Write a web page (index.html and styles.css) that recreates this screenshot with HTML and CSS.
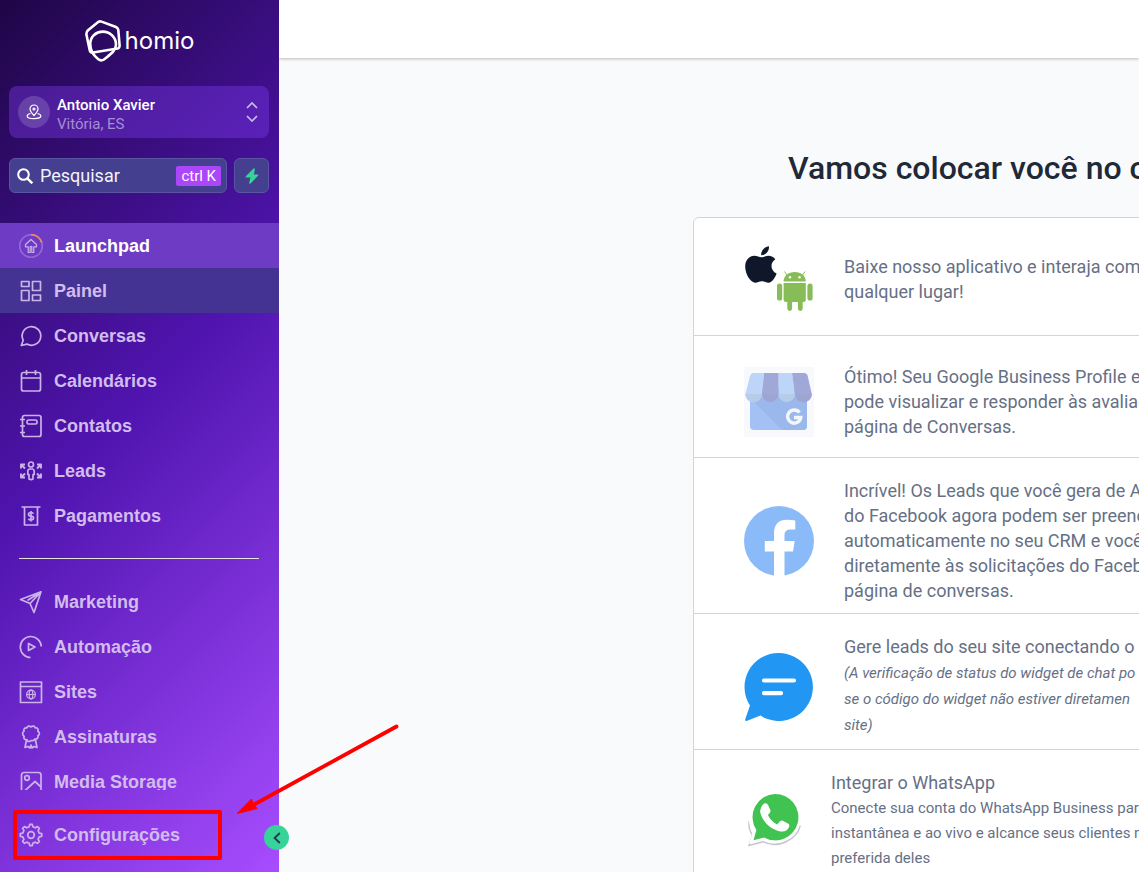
FILE: index.html
```
<!DOCTYPE html>
<html lang="pt-BR">
<head>
    <meta charset="UTF-8">
    <meta name="viewport" content="width=device-width, initial-scale=1.0">
    <title>Homio - Launchpad</title>
    <link rel="stylesheet" href="styles.css">
</head>
<body>
    <aside class="sidebar">
        <a class="logo" href="#">
            <svg width="36" height="42" viewBox="0 0 36 42" fill="none" stroke="#fff" stroke-width="2.6" stroke-linejoin="round">
                <path d="M13.500 1.700Q15 1 16.500 1.600L31 7Q33 8 33.300 10L34.600 25.500Q34.600 28 32.600 28.500L8 32.500Q5.500 32.700 4.800 30.500L1.400 14.500Q1.200 12 3 10.300Z"/>
                <path d="M5.200 23.500C5.500 16.500 11 11.600 17.800 11.600S31 17 31 24.500C31 31 25 34.500 19 39.500Q16 41.500 13 39C8 35 5.200 30 5.200 23.500Z"/>
            </svg>
            <span>homio</span>
        </a>
        <button class="account" type="button">
            <span class="avatar">
                <svg width="16" height="16" viewBox="0 0 16 16" fill="none" stroke="#fff" stroke-width="1.200" stroke-linejoin="round">
                    <path d="M8 11.500C5.500 8.900 4 7.200 4 5a4 4 0 0 1 8 0c0 2.200-1.500 3.900-4 6.500z"/>
                    <circle cx="8" cy="5" r="1"/>
                    <path d="M4.500 9.500C2.500 10 1.200 10.800 1.200 12c0 1.500 3 2.600 6.800 2.600s6.800-1.100 6.800-2.600c0-1.200-1.300-2-3.300-2.500"/>
                </svg>
            </span>
            <span class="account-text">
                <strong>Antonio Xavier</strong>
                <span>Vitória, ES</span>
            </span>
            <svg width="12" height="20" viewBox="0 0 12 20" fill="none" stroke="#cbbbe6" stroke-width="1.700">
                <path d="M1 6l5-5 5 5M1 14l5 5 5-5"/>
            </svg>
        </button>
        <div class="search-row">
            <div class="search">
                <svg width="16" height="16" viewBox="0 0 16 16" fill="none" stroke="#fff" stroke-width="2">
                    <circle cx="6.500" cy="6.500" r="5.300"/>
                    <path d="M10.300 10.300l5 5" stroke-width="2.400"/>
                </svg>
                <input type="text" placeholder="Pesquisar" aria-label="Pesquisar">
                <kbd>ctrl K</kbd>
            </div>
            <button class="bolt" type="button" aria-label="Ações rápidas">
                <svg width="14" height="16" viewBox="0 0 14 16" fill="#37d399">
                    <path d="M8.500.5L.8 8.300q-.5 1 .5 1.200H5.400L4 15.500h1.600L13.200 7.600q.5-1-.5-1.200H8.900L10 .5z"/>
                </svg>
            </button>
        </div>
        <nav class="menu">
            <a class="item active" href="#">
                <svg width="24" height="24" viewBox="0 0 24 24">
                    <circle cx="12" cy="12" r="11.300" stroke="#9566d6"/>
                    <path d="M12 .7a11.300 11.300 0 0 1 10.700 7.800" stroke="#f58a5b" stroke-width="1.800"/>
                    <path d="M12 5.500L6.500 10.500v2.300h2.700V18.500h2v-6h1.600v6h2v-5.700h2.700V10.500z" stroke-width="1.200"/>
                </svg>
                Launchpad
            </a>
            <a class="item hover" href="#">
                <svg width="24" height="24" viewBox="0 0 24 24">
                    <path d="M2.500 2.500h7.500v5h-7.500zM13.500 2.500h8v9h-8zM2.500 11.500h7.500v10h-7.500zM13.500 16h8v5.500h-8z"/>
                </svg>
                Painel
            </a>
            <a class="item" href="#">
                <svg width="24" height="24" viewBox="0 0 24 24">
                    <path d="M2.300 21.500l1.900-5.300A9.300 9.300 0 1 1 8 20.100z"/>
                </svg>
                Conversas
            </a>
            <a class="item" href="#">
                <svg width="24" height="24" viewBox="0 0 24 24">
                    <rect x="2.500" y="3.500" width="19" height="18.500" rx="2"/>
                    <path d="M7.500 1v5M16.500 1v5M2.500 9h19"/>
                </svg>
                Calendários
            </a>
            <a class="item" href="#">
                <svg width="24" height="24" viewBox="0 0 24 24">
                    <rect x="3.500" y="1.500" width="18.500" height="21" rx="2"/>
                    <rect x="8" y="6" width="10" height="4" rx="1.500"/>
                    <path d="M1 5.500h5M1 12h5M1 18.500h5"/>
                </svg>
                Contatos
            </a>
            <a class="item" href="#">
                <svg width="24" height="24" viewBox="0 0 24 24">
                    <circle cx="12" cy="5.500" r="2.500"/>
                    <path d="M10.500 10h3q1.700.3 1.700 2v3.500h-1.200v4.500q-2 1.200-4 0v-4.500H8.800V12q0-1.700 1.700-2z"/>
                    <path d="M6 9.500L2 5.500V9.500M1.500 5.500H6M18 9.500L22 5.500V9.500M22.500 5.500H18M6 14.500L2 18.500V14.500M1.500 18.500H6M18 14.500l4 4V14.500M22.500 18.500H18" stroke-width="1.900"/>
                </svg>
                Leads
            </a>
            <a class="item" href="#">
                <svg width="24" height="24" viewBox="0 0 24 24">
                    <path d="M2.500 3h19M5.500 3v18h13V3"/>
                    <path d="M14.500 9.800q-.5-1.300-2.500-1.300-2.500 0-2.500 1.800T12 12.200t2.500 1.900T12 16q-2 0-2.500-1.400M12 7v10.500"/>
                </svg>
                Pagamentos
            </a>
            <hr class="divider">
            <a class="item" href="#">
                <svg width="24" height="24" viewBox="0 0 24 24">
                    <path d="M22 1.800L1.500 9.500l9.500 4 4 9zM22 1.800L11 13.500M22 1.800L8.500 10.500"/>
                </svg>
                Marketing
            </a>
            <a class="item" href="#">
                <svg width="24" height="24" viewBox="0 0 24 24">
                    <path d="M22.300 11.500A10.500 10.500 0 1 0 11.500 22.500M9.500 8.500v7l6.500-3.500z"/>
                </svg>
                Automação
            </a>
            <a class="item" href="#">
                <svg width="24" height="24" viewBox="0 0 24 24">
                    <path d="M1.500 2h21v20.500h-21zM1.500 6.500h21"/>
                    <g stroke-width="1.200">
                        <circle cx="12" cy="14.500" r="4.400"/>
                        <ellipse cx="12" cy="14.500" rx="1.800" ry="4.400"/>
                        <path d="M7.600 14.500h8.800"/>
                    </g>
                </svg>
                Sites
            </a>
            <a class="item" href="#">
                <svg width="24" height="24" viewBox="0 0 24 24">
                    <path d="M12 2q1-1 2.300-.9t2 1.700q1.700-.2 2.400.9t.2 2.500q1.500.8 1.500 2.200t-1.500 2.400q.4 1.600-.5 2.500t-2.400.7q-.8 1.500-2.100 1.600T12 15.500q-1 1.200-2.300 1t-1.800-1.800q-1.700.2-2.500-.7t-.3-2.500Q3.600 10.200 3.600 8.600T5 6.300q-.5-1.600.3-2.600t2.400-.8Q8.300 1.300 9.600 1.100T12 2z"/>
                    <path d="M7.500 15L6 22.500l3-1 2 1.500 1-3 1 3 2-1.500 3 1L16.500 15"/>
                </svg>
                Assinaturas
            </a>
            <a class="item" href="#">
                <svg width="24" height="24" viewBox="0 0 24 24">
                    <rect x="2.500" y="2.500" width="19.500" height="19.500" rx="2.500"/>
                    <circle cx="8" cy="8" r="2.300"/>
                    <path d="M5 21.500L16 11.500l6 5.500"/>
                </svg>
                Media Storage
            </a>
        </nav>
        <a class="item settings" href="#">
            <svg width="24" height="24" viewBox="0 0 24 24">
                <circle cx="12" cy="12" r="3.300"/>
                <path d="M10.200 3.700L10.700 1.300h2.600l.5 2.400 2.600 1.100 2.100-1.300 1.900 1.900-1.300 2.100 1.100 2.600 2.500.6v2.600l-2.500.5-1.100 2.600 1.300 2.100-1.900 1.900-2.100-1.300-2.600 1.100-.5 2.500h-2.600l-.5-2.500-2.600-1.100-2.100 1.300-1.900-1.900 1.300-2.100-1.100-2.600-2.500-.5v-2.600l2.500-.6L4.900 7.500 3.600 5.400l1.900-1.900 2.100 1.300z"/>
            </svg>
            Configurações
        </a>
        <button class="collapse" type="button" aria-label="Recolher menu">
            <svg width="8" height="12" viewBox="0 0 8 12" fill="none" stroke="#1f3b4d" stroke-width="1.800">
                <path d="M6.800 1L1.600 6l5.200 5"/>
            </svg>
        </button>
    </aside>

    <div class="page">
        <header class="topbar"></header>
        <main class="content">
            <h1>Vamos colocar você no c</h1>
            <ul class="steps">
                <li class="step step-app">
                    <svg width="70" height="70" viewBox="0 0 70 70">
                        <g fill="#0f172a">
                            <path d="M17.500 13.300c2 0 4-1.600 7-1.600 2.800 0 5.300 1.300 6.800 3.600-5.500 3.500-5 11.500 1.300 14.300-1.300 4-4.500 9-8 9.200-2.600 0-3.500-1.500-6.600-1.500s-4.200 1.500-6.600 1.500C6 38.500 1.200 29.500 1.200 22.500c0-6.500 4.300-10.700 9-10.700 3 0 5 1.500 7.300 1.500z"/>
                            <path d="M17.200 11.300C16.700 6.700 20.500 2.700 25 2.200c.4 4.700-3.200 8.800-7.800 9.100z"/>
                        </g>
                        <g fill="#87bd56">
                            <path d="M39.600 37.500c0-5.500 4.500-9.500 11.100-9.500s11.100 4 11.100 9.500z"/>
                            <path d="M39.600 39h22.200v16.500q0 2.500-2.500 2.500H58.700v6.500a2.400 2.400 0 0 1-4.800 0V58h-5.800v6.500a2.400 2.400 0 0 1-4.800 0V58h-1.200q-2.500 0-2.500-2.500z"/>
                            <rect x="33" y="39.500" width="5.200" height="17" rx="2.600"/>
                            <rect x="63.400" y="39.500" width="5.200" height="17" rx="2.600"/>
                            <path d="M40.500 27.500l3 4.500M61 27.500l-3 4.500" stroke="#87bd56" stroke-width="1"/>
                        </g>
                        <circle cx="46" cy="33.300" r="1.200" fill="#fff"/>
                        <circle cx="55.500" cy="33.300" r="1.200" fill="#fff"/>
                    </svg>
                    <div class="step-text">
                        <p>Baixe nosso aplicativo e interaja com s<br>qualquer lugar!</p>
                    </div>
                </li>
                <li class="step">
                    <svg width="70" height="70" viewBox="0 0 70 70">
                        <path fill="#f8f9fc" d="M0 0h70v70H0z"/>
                        <path fill="#a3c1f4" d="M6 20h57v39q0 4-4 4H10q-4 0-4-4z"/>
                        <path fill="#9bb8ec" d="M10 35l28 28h21q4 0 4-4V30H20z"/>
                        <path fill="#bcd5f8" d="M9.500 6H20l-2 22H1.200L6 9q1-3 3.500-3zM34.500 6H48l3 22H34.500z"/>
                        <path fill="#a0a8d8" d="M20 6h14.500v22H18zM48 6h12q3 0 3.700 3L68 28H51z"/>
                        <path fill="#b6cdea" d="M1.200 27H18a8.400 8.400 0 0 1-16.800 0zM34.500 27H51a8.250 8.250 0 0 1-16.500 0z"/>
                        <path fill="#9fa5d2" d="M18 27h16.500A8.250 8.250 0 0 1 18 27zM51 27h17a8.500 8.500 0 0 1-17 0z"/>
                        <path fill="none" stroke="#f3f6fb" stroke-width="3.400" d="M55.500 45.500a6.600 6.600 0 1 0 1.300 5H50"/>
                    </svg>
                    <div class="step-text">
                        <p>Ótimo! Seu Google Business Profile es<br>pode visualizar e responder às avaliaç<br>página de Conversas.</p>
                    </div>
                </li>
                <li class="step">
                    <svg width="70" height="70" viewBox="0 0 70 70">
                        <circle cx="35" cy="35" r="35" fill="#8bbaf9"/>
                        <path fill="#fff" d="M30 70V45.500h-9.200v-10.500H30v-7.500C30 18 35 13.800 43 13.800q4 0 8.300.7v9H46.500q-6 0-6 5.500v6h10.200l-1.700 10.500h-8.500V70z"/>
                    </svg>
                    <div class="step-text">
                        <p>Incrível! Os Leads que você gera de An<br>do Facebook agora podem ser preench<br>automaticamente no seu CRM e você<br>diretamente às solicitações do Facebo<br>página de conversas.</p>
                    </div>
                </li>
                <li class="step">
                    <svg width="70" height="70" viewBox="0 0 70 70">
                        <path fill="#2196f3" d="M35 1a34 34 0 1 1-18.500 62.600L2.500 69Q.8 69.200 1.300 67L6 53.500A34 34 0 0 1 35 1z"/>
                        <path stroke="#fff" stroke-width="4.200" stroke-linecap="round" d="M20 28.500h30M20 41.200h17"/>
                    </svg>
                    <div class="step-text">
                        <p>Gere leads do seu site conectando o w</p>
                        <p class="hint">(A verificação de status do widget de chat po<br>se o código do widget não estiver diretamen<br>site)</p>
                    </div>
                </li>
                <li class="step">
                    <svg width="57" height="70" viewBox="0 0 57 70">
                        <path fill="none" stroke="#c3c3d2" stroke-width="1.400" d="M5 35C4.500 42 7 47 8.500 49L5 59.500l14-3.800c15 7.500 34-2 37.300-16"/>
                        <path fill="#fff" d="M31 5a26 26 0 1 1-12.500 49L5 58l4-12.500A26 26 0 0 1 31 5z"/>
                        <path fill="#41c351" d="M31 8a23.200 23.200 0 1 1-11 43.500l-10.500 2.800 2.900-10.300A23.200 23.200 0 0 1 31 8z"/>
                        <path fill="#fff" d="M19 18.500q2.500-2.500 4.800 0l2.400 5.200q.8 1.800-.5 3.200l-1.800 2.200c2.200 4.500 5 7.300 9.300 9.300l2.600-3q1.300-1.300 3-.6l5.600 2.900q1.500 1 .6 3.300-2.200 5.300-8.500 4.500c-10-2-18.500-10.500-20.300-19.500q-.4-4.500 2.800-7.500z"/>
                    </svg>
                    <div class="step-text">
                        <p>Integrar o WhatsApp</p>
                        <p class="desc">Conecte sua conta do WhatsApp Business par<br>instantânea e ao vivo e alcance seus clientes n<br>preferida deles</p>
                    </div>
                </li>
            </ul>
        </main>
    </div>

    <div class="mark-box"></div>
    <svg class="mark-arrow" width="162" height="92" viewBox="0 0 162 92">
        <path d="M159.500 3.500L18 81" stroke="#f00" stroke-width="3.800" stroke-linecap="round"/>
        <path d="M0 90.500L14.500 76l1.500 4 4 5.500z" fill="#f00" stroke="#f00" stroke-linejoin="round"/>
    </svg>
</body>
</html>
```

FILE: styles.css
```
* {
    box-sizing: border-box;
}
body {
    margin: 0;
    display: flex;
    height: 100vh;
    overflow: hidden;
    position: relative;
    font-family: Roboto, sans-serif;
    background: #f9fafc;
}
button {
    border: none;
    padding: 0;
    font-family: inherit;
    cursor: pointer;
}
svg {
    flex: none;
}

/* sidebar */
.sidebar {
    position: relative;
    z-index: 2;
    display: flex;
    flex-direction: column;
    flex: none;
    width: 279px;
    padding: 20px 0 15px;
    background: linear-gradient(135deg, #1f0646 0%, #5014b0 47%, #a74dff 100%);
}
.logo {
    display: flex;
    align-items: center;
    justify-content: center;
    gap: 4px;
    color: #fff;
    font: 400 24px/42px Inter, sans-serif;
    text-decoration: none;
}
.account {
    display: flex;
    align-items: center;
    gap: 7px;
    height: 52px;
    margin: 24px 10px 20px 9px;
    padding: 0 11px 0 9px;
    border-radius: 8px;
    background: rgba(124, 58, 237, 0.4);
    text-align: left;
}
.avatar {
    display: flex;
    align-items: center;
    justify-content: center;
    width: 32px;
    height: 32px;
    border-radius: 50%;
    background: rgba(255, 255, 255, 0.16);
}
.account-text {
    flex: 1;
    padding-top: 5px;
    font-size: 15px;
    line-height: 19px;
    color: #a68dd0;
}
.account-text strong {
    display: block;
    font-weight: 500;
    color: #fff;
}
.search-row {
    display: flex;
    gap: 7px;
    margin: 0 10px 30px 9px;
}
.search, .bolt {
    display: flex;
    align-items: center;
    height: 35px;
    border: 1px solid #5a55a0;
    border-radius: 6px;
    background: #443f8f;
}
.search {
    flex: 1;
    min-width: 0;
    gap: 7px;
    padding: 0 5px 0 7px;
}
.search input {
    flex: 1;
    min-width: 0;
    padding: 0;
    border: none;
    outline: none;
    background: none;
    color: #fff;
    font: 18px Roboto, sans-serif;
}
.search input::placeholder {
    color: #f4f2fa;
}
.search kbd {
    padding: 0 5px;
    border-radius: 2px;
    background: #ab46fb;
    color: #fff;
    font: 15px/20px Roboto, sans-serif;
}
.bolt {
    flex: none;
    justify-content: center;
    width: 35px;
}
.menu {
    flex: 1;
    min-height: 0;
    overflow: hidden;
    margin-bottom: 22px;
}
.item {
    display: flex;
    align-items: center;
    gap: 11px;
    height: 45px;
    padding: 1px 0 0 19px;
    color: #d2bcee;
    font: bold 18px "Liberation Sans", sans-serif;
    text-decoration: none;
}
.item svg {
    fill: none;
    stroke: #cbb3ea;
    stroke-width: 1.7;
    stroke-linejoin: round;
}
.item.active {
    color: #fff;
    background: #6e3bc4;
}
.item.hover {
    background: #453394;
}
.divider {
    height: 1px;
    margin: 20px 20px 20px 19px;
    border: none;
    background: #e8e3d8;
}
.settings {
    flex: none;
}
.collapse {
    position: absolute;
    right: -10px;
    bottom: 22px;
    display: flex;
    align-items: center;
    justify-content: center;
    width: 25px;
    height: 25px;
    border-radius: 50%;
    background: #37d399;
}

/* page */
.page {
    flex: 1;
    min-width: 0;
    overflow: hidden;
}
.topbar {
    height: 58px;
    background: #fff;
    box-shadow: 0 1px 3px rgba(0, 0, 0, 0.25);
}
.content {
    min-width: 1100px;
    padding: 90px 0 0 414px;
}
h1 {
    margin: 0 0 29px;
    padding-left: 95px;
    color: #1f2937;
    font-size: 32px;
    font-weight: 500;
    line-height: 40px;
    white-space: nowrap;
}
.steps {
    margin: 0;
    padding: 0;
    list-style: none;
    border: 1px solid #d0d5dd;
    border-radius: 6px;
    background: #fff;
}
.step {
    display: flex;
    align-items: center;
    gap: 30px;
    padding: 20px 50px 10px;
    min-height: 122px;
    color: #667085;
    font-size: 18px;
    line-height: 25px;
    white-space: nowrap;
}
.step + .step {
    border-top: 1px solid #d0d5dd;
}
.step-app {
    min-height: 117px;
    padding-bottom: 15px;
}
.step p {
    margin: 0;
}
.step .hint {
    padding: 1px 0;
    font-size: 15px;
    font-style: italic;
    line-height: 26px;
}
.step .desc {
    padding-top: 1px;
    font-size: 15px;
}

/* highlight over the settings link */
.mark-box {
    position: absolute;
    z-index: 3;
    left: 13px;
    bottom: 12px;
    width: 209px;
    height: 50px;
    border: 4px solid #f00;
    border-radius: 2px;
    pointer-events: none;
}
.mark-arrow {
    position: absolute;
    z-index: 3;
    left: 237px;
    bottom: 57px;
    pointer-events: none;
}
```
